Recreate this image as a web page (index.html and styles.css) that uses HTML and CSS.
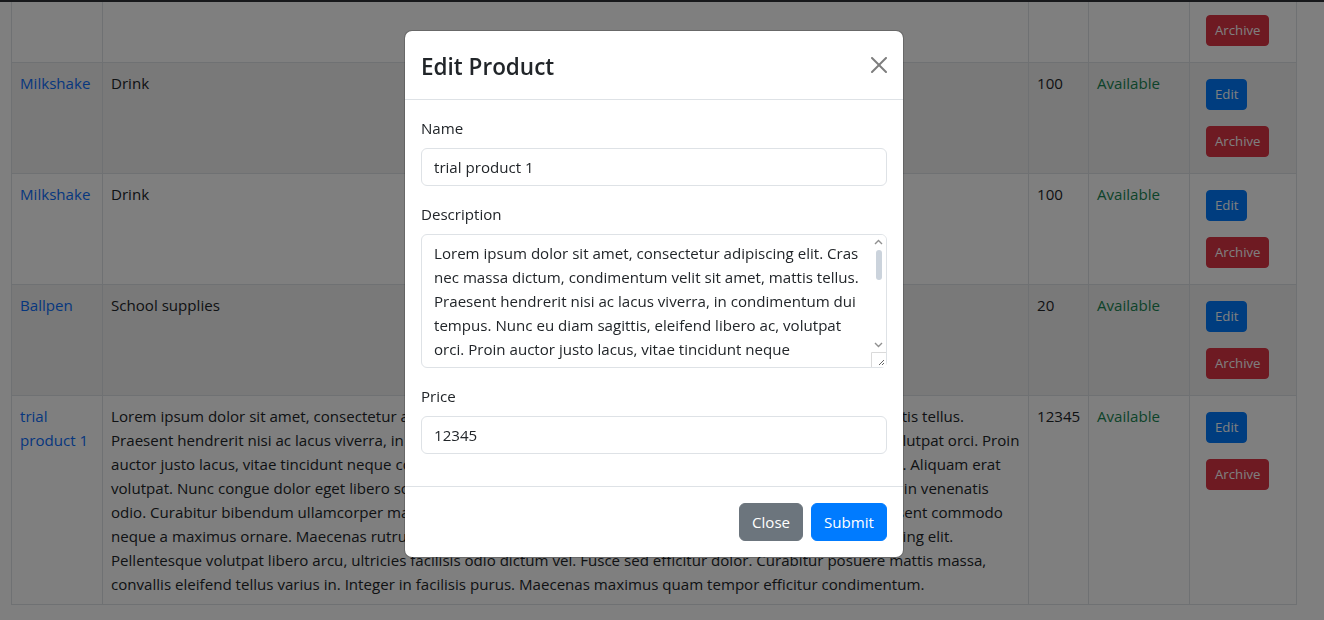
FILE: index.html
```html
<!DOCTYPE html>
<html lang="en">
<head>
<meta charset="utf-8">
<title>Products</title>
<link rel="stylesheet" href="styles.css">
</head>
<body class="modal-open">
<nav class="navbar">
  <span class="brand">Shop Admin</span>
</nav>
<main class="container">
  <div class="page-head">
    <h2 class="page-title">Products</h2>
  </div>
  <table class="table">
    <colgroup>
      <col class="col-name">
      <col class="col-desc">
      <col class="col-price">
      <col class="col-avail">
      <col class="col-actions">
    </colgroup>
    <thead>
      <tr><th>Name</th><th>Description</th><th>Price</th><th>Availability</th><th>Actions</th></tr>
    </thead>
    <tbody>
      <tr>
        <td><a class="product-link" href="#">Burger</a></td>
        <td class="desc">Food</td>
        <td>150</td>
        <td class="text-success">Available</td>
        <td><button class="btn btn-sm btn-primary">Edit</button><button class="btn btn-sm btn-danger">Archive</button></td>
      </tr>
      <tr>
        <td><a class="product-link" href="#">Fries</a></td>
        <td class="desc">Food</td>
        <td>80</td>
        <td class="text-success">Available</td>
        <td><button class="btn btn-sm btn-primary">Edit</button><button class="btn btn-sm btn-danger">Archive</button></td>
      </tr>
      <tr id="anchor-row">
        <td><a class="product-link" href="#">Milkshake</a></td>
        <td class="desc">Drink</td>
        <td>100</td>
        <td class="text-success">Available</td>
        <td><button class="btn btn-sm btn-primary">Edit</button><button class="btn btn-sm btn-danger">Archive</button></td>
      </tr>
      <tr>
        <td><a class="product-link" href="#">Milkshake</a></td>
        <td class="desc">Drink</td>
        <td>100</td>
        <td class="text-success">Available</td>
        <td><button class="btn btn-sm btn-primary">Edit</button><button class="btn btn-sm btn-danger">Archive</button></td>
      </tr>
      <tr>
        <td><a class="product-link" href="#">Ballpen</a></td>
        <td class="desc">School supplies</td>
        <td>20</td>
        <td class="text-success">Available</td>
        <td><button class="btn btn-sm btn-primary">Edit</button><button class="btn btn-sm btn-danger">Archive</button></td>
      </tr>
      <tr>
        <td><a class="product-link" href="#">trial product 1</a></td>
        <td class="desc">Lorem ipsum dolor sit amet, consectetur adipiscing elit. Cras nec massa dictum, condimentum velit sit amet, mattis tellus.<br>Praesent hendrerit nisi ac lacus viverra, in condimentum dui tempus. Nunc eu diam sagittis, eleifend libero ac, volutpat orci. Proin<br>auctor justo lacus, vitae tincidunt neque consequat. Sed ultricies fermentum ipsum, sed tincidunt ipsum cursus a. Aliquam erat<br>volutpat. Nunc congue dolor eget libero sollicitudin, vel ultricies tortor luctus. Vivamus non felis sit amet quis nisl in venenatis<br>odio. Curabitur bibendum ullamcorper mauris, sed dapibus lectus. Donec in hac habitasse platea dictumst. Praesent commodo<br>neque a maximus ornare. Maecenas rutrum lorem non turpis tristique, sed et posuere purus consectetur adipiscing elit.<br>Pellentesque volutpat libero arcu, ultricies facilisis odio dictum vel. Fusce sed efficitur dolor. Curabitur posuere mattis massa,<br>convallis eleifend tellus varius in. Integer in facilisis purus. Maecenas maximus quam tempor efficitur condimentum.</td>
        <td>12345</td>
        <td class="text-success">Available</td>
        <td><button class="btn btn-sm btn-primary">Edit</button><button class="btn btn-sm btn-danger">Archive</button></td>
      </tr>
    </tbody>
  </table>
</main>

<div class="topline"></div>
<div class="modal-backdrop"></div>

<div class="modal" role="dialog" aria-modal="true">
  <div class="modal-dialog">
    <form class="modal-content">
      <div class="modal-header">
        <h4 class="modal-title">Edit Product</h4>
        <button type="button" class="btn-close" aria-label="Close">
          <svg viewBox="0 0 16 16" width="16" height="16"><path d="M.293.293a1 1 0 0 1 1.414 0L8 6.586 14.293.293a1 1 0 1 1 1.414 1.414L9.414 8l6.293 6.293a1 1 0 0 1-1.414 1.414L8 9.414l-6.293 6.293a1 1 0 0 1-1.414-1.414L6.586 8 .293 1.707a1 1 0 0 1 0-1.414z"/></svg>
        </button>
      </div>
      <div class="modal-body">
        <div class="mb-3">
          <label class="form-label" for="name">Name</label>
          <input class="form-control" id="name" type="text" value="trial product 1">
        </div>
        <div class="mb-3">
          <label class="form-label" for="description">Description</label>
          <div class="textarea-wrap">
            <textarea class="form-control textarea" id="description" rows="5">Lorem ipsum dolor sit amet, consectetur adipiscing elit. Cras nec massa dictum, condimentum velit sit amet, mattis tellus. Praesent hendrerit nisi ac lacus viverra, in condimentum dui tempus. Nunc eu diam sagittis, eleifend libero ac, volutpat orci. Proin auctor justo lacus, vitae tincidunt neque consequat. Sed ultricies fermentum ipsum, sed tincidunt ipsum cursus a. Aliquam erat volutpat. Nunc congue dolor eget libero sollicitudin, vel ultricies tortor luctus. Vivamus non felis sit amet quis nisl in venenatis odio. Curabitur bibendum ullamcorper mauris, sed dapibus lectus. Donec in hac habitasse platea dictumst. Praesent commodo neque a maximus ornare. Maecenas rutrum lorem non turpis tristique, sed et posuere purus consectetur adipiscing elit. Pellentesque volutpat libero arcu, ultricies facilisis odio dictum vel. Fusce sed efficitur dolor. Curabitur posuere mattis massa, convallis eleifend tellus varius in. Integer in facilisis purus. Maecenas maximus quam tempor efficitur condimentum.</textarea>
            <div class="fake-scrollbar" aria-hidden="true">
              <span class="sb-arrow sb-up"></span>
              <span class="sb-track"><span class="sb-thumb"></span></span>
              <span class="sb-arrow sb-down"></span>
            </div>
          </div>
        </div>
        <div class="mb-3">
          <label class="form-label" for="price">Price</label>
          <input class="form-control" id="price" type="text" inputmode="numeric" value="12345">
        </div>
      </div>
      <div class="modal-footer">
        <button type="button" class="btn btn-secondary">Close</button>
        <button type="submit" class="btn btn-primary">Submit</button>
      </div>
    </form>
  </div>
</div>
<script src="script.js"></script>
</body>
</html>
```

FILE: styles.css
```css
:root {
  --font: "Open Sans", "Noto Sans", sans-serif;
  --fs: 15.1px;
}
* { box-sizing: border-box; }
html { scrollbar-width: none; }
body {
  margin: 0;
  font-family: var(--font);
  font-size: var(--fs);
  line-height: 24px;
  color: #212529;
  background: #fff;
}
body.modal-open { overflow: hidden; padding-right: 16px; }

.navbar {
  background: #343a40;
  height: 56px;
  display: flex;
  align-items: center;
  padding: 0 16px;
}
.brand { color: #fff; font-size: 20px; }

.container { padding: 0 11px 120px 11px; }
.page-head { padding: 24px 0 16px; }
.page-title { margin: 0; font-size: 32px; font-weight: 500; line-height: 1.2; }

.table { width: 100%; border-collapse: collapse; table-layout: fixed; }
.col-name { width: 91px; }
.col-price { width: 60px; }
.col-avail { width: 101px; }
.col-actions { width: 107px; }
.table th, .table td {
  border: 1px solid #dee2e6;
  padding: 8px;
  vertical-align: top;
  text-align: left;
}
.table tbody tr:nth-of-type(odd) td { background: #f2f2f2; }
.desc { white-space: nowrap; overflow: hidden; }
.product-link { color: #0d6efd; text-decoration: none; }
.text-success { color: #198754; }

.btn {
  display: inline-block;
  font-family: inherit;
  font-size: var(--fs);
  line-height: 24px;
  padding: 6px 12px;
  border: 1px solid transparent;
  border-radius: 6px;
  color: #fff;
  cursor: pointer;
}
.btn-sm {
  font-size: 13.2px;
  line-height: 21px;
  padding: 4px 8px;
  border-radius: 4px;
  margin: 8px;
}
.btn-primary { background: #007bff; border-color: #007bff; }
.btn-danger { background: #dc3545; border-color: #dc3545; }
.btn-secondary { background: #6c757d; border-color: #6c757d; }

.topline {
  position: fixed;
  top: 0;
  left: 0;
  right: 0;
  height: 2px;
  background: #2e3036;
  z-index: 1030;
}
.modal-backdrop {
  position: fixed;
  inset: 0;
  background: #000;
  opacity: .5;
  z-index: 1050;
}
.modal {
  position: fixed;
  inset: 0;
  padding-right: 16px;
  z-index: 1055;
}
.modal-dialog { width: 500px; margin: 30px auto 0; }
.modal-content {
  background: #fff;
  background-clip: padding-box;
  border: 1px solid rgba(0,0,0,.175);
  border-radius: 8px;
}
.modal-header {
  display: flex;
  align-items: center;
  justify-content: space-between;
  padding: 16px;
  border-bottom: 1px solid #dee2e6;
}
.modal-title {
  margin: 0;
  font-size: 22.5px;
  font-weight: 600;
  line-height: 36px;
  padding-top: 2px;
  margin-bottom: -2px;
}
.btn-close {
  display: flex;
  width: 16px;
  height: 16px;
  padding: 0;
  border: 0;
  background: transparent;
  opacity: .5;
  cursor: pointer;
}
.btn-close svg { fill: #000; }

.modal-body { padding: 16px; }
.mb-3 { margin-bottom: 16px; }
.form-label { display: block; margin-bottom: 8px; }
.form-control {
  display: block;
  width: 100%;
  padding: 6px 12px;
  font-family: inherit;
  font-size: var(--fs);
  line-height: 24px;
  color: #212529;
  background: #fff;
  border: 1px solid #dee2e6;
  border-radius: 6px;
  outline: none;
  appearance: none;
}
.textarea-wrap { position: relative; }
.textarea {
  resize: vertical;
  overflow: hidden;
  padding-right: 27px;
}
.textarea::-webkit-resizer {
  background: #fff url("data:image/svg+xml,%3Csvg xmlns='http://www.w3.org/2000/svg' width='15' height='15'%3E%3Cpath d='M0.5 15V0.5H15' fill='none' stroke='%23dadada'/%3E%3Cpath d='M13 8 8 13M13 11 11 13' stroke='%23666' stroke-width='1'/%3E%3C/svg%3E") no-repeat;
}
.fake-scrollbar {
  position: absolute;
  top: 1px;
  right: 1px;
  bottom: 16px;
  width: 15px;
  display: flex;
  flex-direction: column;
  align-items: center;
  background: #fff;
  border-top-right-radius: 5px;
  pointer-events: none;
}
.sb-arrow {
  flex: none;
  width: 15px;
  height: 14px;
  background-position: center;
  background-repeat: no-repeat;
}
.sb-up {
  background-image: url("data:image/svg+xml,%3Csvg xmlns='http://www.w3.org/2000/svg' width='9' height='6'%3E%3Cpath d='M1 5 4.5 1.5 8 5' fill='none' stroke='%23909090' stroke-width='1.4'/%3E%3C/svg%3E");
}
.sb-down {
  background-image: url("data:image/svg+xml,%3Csvg xmlns='http://www.w3.org/2000/svg' width='9' height='6'%3E%3Cpath d='M1 1 4.5 4.5 8 1' fill='none' stroke='%23909090' stroke-width='1.4'/%3E%3C/svg%3E");
}
.sb-track {
  flex: 1;
  width: 100%;
  display: flex;
  justify-content: center;
  padding-top: 1px;
}
.sb-thumb {
  width: 6px;
  height: 30px;
  border-radius: 3px;
  background: #cbd3dc;
}

.modal-footer {
  display: flex;
  justify-content: flex-end;
  align-items: center;
  padding: 12px;
  border-top: 1px solid #dee2e6;
}
.modal-footer .btn { margin: 4px; }
```

FILE: script.js
```js
(function () {
  var anchor = document.getElementById('anchor-row');
  var top = anchor.getBoundingClientRect().top + window.scrollY;
  window.scrollTo(0, top - 63);
})();
```
